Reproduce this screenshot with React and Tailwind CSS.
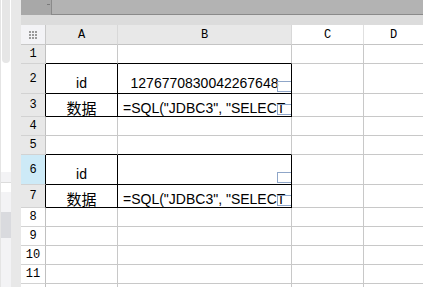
import React from 'react';

const ROWS = [
  { n: 1, h: 'h-[19px]', hdr: 'bg-[#e8e8e8]', blackBottom: true },
  { n: 2, h: 'h-[30px]', hdr: 'bg-[#e8e8e8]', block: true, a: 'id', b: '1276770830042267648', bCenter: true, pb: 'pb-[2px]' },
  { n: 3, h: 'h-[23px]', hdr: 'bg-[#e8e8e8]', block: true, a: '数据', b: '=SQL("JDBC3", "SELECT', pb: 'pb-0' },
  { n: 4, h: 'h-[19px]', hdr: 'bg-[#e8e8e8]' },
  { n: 5, h: 'h-[19px]', hdr: 'bg-[#e8e8e8]', blackBottom: true },
  { n: 6, h: 'h-[30px]', hdr: 'bg-[#cdeaf7]', block: true, a: 'id', b: '', pb: 'pb-[2px]' },
  { n: 7, h: 'h-[23px]', hdr: 'bg-[#e8e8e8]', block: true, a: '数据', b: '=SQL("JDBC3", "SELECT', pb: 'pb-0' },
  { n: 8, h: 'h-[19px]', hdr: 'bg-white' },
  { n: 9, h: 'h-[19px]', hdr: 'bg-white' },
  { n: 10, h: 'h-[19px]', hdr: 'bg-white' },
  { n: 11, h: 'h-[19px]', hdr: 'bg-white' },
  { n: 12, h: 'h-[19px]', hdr: 'bg-white' },
];

const sans = { fontFamily: '"Liberation Sans", Arial, sans-serif' };
const cjk = { fontFamily: '"Noto Sans CJK SC", "Liberation Sans", sans-serif' };
const mono = { fontFamily: '"Liberation Mono", "DejaVu Sans Mono", monospace' };

// small open rectangle marker at the right edge of a cell
const Marker = () => (
  <div className="absolute right-0 bottom-[1px] w-[14px] h-[11px] border border-r-0 border-[#8fa6c8]" />
);

const Row = ({ r }) => {
  const edge = r.block || r.blackBottom ? 'border-b-black' : 'border-b-[#c8c8c8]';
  const side = r.block ? 'border-r-black' : 'border-r-[#c8c8c8]';
  const isCjk = r.a === '数据';
  return (
    <div className={`flex ${r.h} shrink-0`}>
      <div
        className={`w-[25px] shrink-0 flex items-center justify-center text-[12px] text-black border-r border-b border-b-[#d2d2d2] ${r.block ? 'border-r-black' : 'border-r-[#c0c0c0]'} ${r.hdr}`}
        style={mono}
      >
        {r.n}
      </div>
      <div
        className={`w-[72px] shrink-0 flex items-end justify-center border-r border-b ${side} ${edge} ${r.pb || ''}`}
      >
        {r.a && (
          <span
            className={isCjk ? 'text-[15px] leading-[16px] text-black' : 'text-[14px] leading-[16px] text-black'}
            style={isCjk ? cjk : sans}
          >
            {r.a}
          </span>
        )}
      </div>
      <div
        className={`relative w-[174px] shrink-0 flex items-end overflow-hidden border-r border-b ${side} ${edge} ${r.bCenter ? 'justify-center' : 'justify-start pl-[5px]'} ${r.pb || ''}`}
      >
        {r.b && (
          <span className="text-[14px] leading-[16px] text-black whitespace-nowrap" style={sans}>
            {r.b}
          </span>
        )}
        {r.block && <Marker />}
      </div>
      <div className="w-[72px] shrink-0 border-r border-b border-[#c8c8c8]" />
      <div className="flex-1 border-b border-[#c8c8c8]" />
    </div>
  );
};

const App = () => {
  return (
    <div className="w-[423px] h-[287px] flex overflow-hidden bg-white">
      {/* left side panel */}
      <div className="w-[11px] shrink-0 flex flex-col bg-white border-l border-[#e4e4e4]">
        <div className="h-[63px] shrink-0 pl-[1px] pr-[1px]">
          <div className="h-full bg-[#e6e6e6] rounded-b-[4px]" />
        </div>
        <div className="h-[109px] shrink-0 bg-white" />
        <div className="h-[10px] shrink-0 bg-[#f3f3f5]" />
        <div className="h-[10px] shrink-0 bg-white border-t border-[#dcdcdc]" />
        <div className="h-[20px] shrink-0 bg-[#f3f3f5]" />
        <div className="h-[26px] shrink-0 bg-[#d9dade]" />
        <div className="flex-1 bg-[#f3f3f5]" />
      </div>
      <div className="w-[10px] shrink-0 bg-[#e8e8e8]" />

      {/* sheet */}
      <div className="flex-1 flex flex-col min-w-0">
        {/* top bar */}
        <div className="h-[15px] shrink-0 flex">
          <div className="w-[30px] shrink-0 bg-[#a8a8a8] relative">
            <div className="absolute right-[1px] top-[4px] w-[3px] h-px bg-[#7a7a7a]" />
          </div>
          <div className="flex-1 bg-[#b3b3b3] border-l border-b border-[#8a8a8a]" />
        </div>
        <div className="h-[10px] shrink-0 bg-[#dcdcdc]" />

        {/* column header */}
        <div className="flex h-[20px] shrink-0 text-[12px] text-black" style={mono}>
          <div className="w-[25px] shrink-0 flex items-center justify-center bg-[#f3f3f6] border-r border-b border-[#c8c8c8]">
            <div className="grid grid-cols-3 gap-[1px]">
              {Array.from({ length: 9 }).map((_, i) => (
                <div key={i} className="w-[2px] h-[2px] bg-[#9a9a9a]" />
              ))}
            </div>
          </div>
          <div className="w-[72px] shrink-0 flex items-center justify-center bg-[#e8e8e8] border-r border-b border-r-[#d8d8d8] border-b-[#c4c4c4]">A</div>
          <div className="w-[174px] shrink-0 flex items-center justify-center bg-[#e8e8e8] border-r border-b border-r-[#d8d8d8] border-b-[#c4c4c4]">B</div>
          <div className="w-[72px] shrink-0 flex items-center justify-center bg-white border-r border-b border-r-[#e0e0e0] border-b-[#c4c4c4]">C</div>
          <div className="flex-1 flex items-center justify-center bg-white border-b border-[#c4c4c4]">D</div>
        </div>

        {ROWS.map((r) => (
          <Row key={r.n} r={r} />
        ))}
      </div>
    </div>
  );
};

export default App;
